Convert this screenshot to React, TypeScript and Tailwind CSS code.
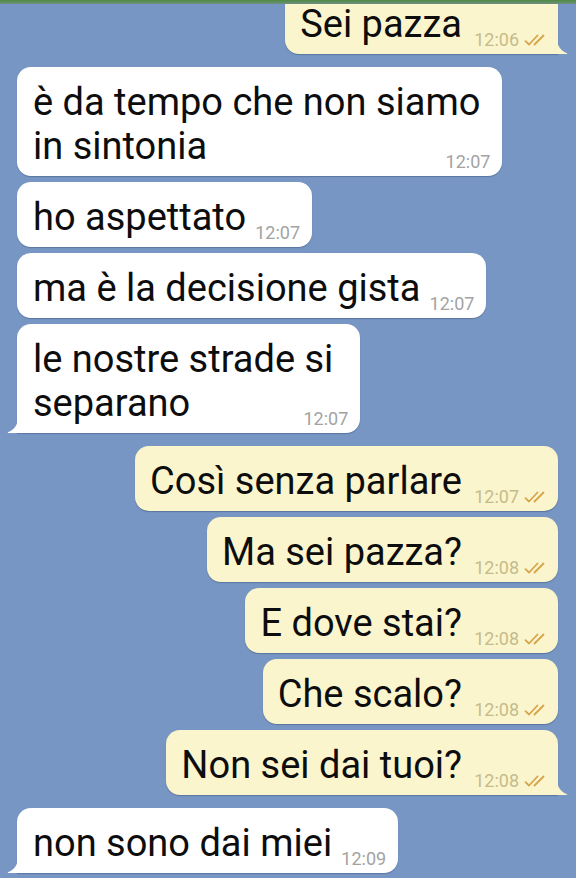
import React from "react";

type Msg = {
  out: boolean;
  lines: string[];
  time: string;
  tail?: boolean;
  gap?: "group" | "near" | "first";
  wide?: string;
};

const MESSAGES: Msg[] = [
  { out: true, lines: ["Sei pazza"], time: "12:06", tail: true, gap: "first" },
  { out: false, lines: ["è da tempo che non siamo", "in sintonia"], time: "12:07", gap: "group", wide: "pr-[22px]" },
  { out: false, lines: ["ho aspettato"], time: "12:07", gap: "near" },
  { out: false, lines: ["ma è la decisione gista"], time: "12:07", gap: "near" },
  { out: false, lines: ["le nostre strade si", "separano"], time: "12:07", tail: true, gap: "near", wide: "pr-[27px]" },
  { out: true, lines: ["Così senza parlare"], time: "12:07", gap: "group" },
  { out: true, lines: ["Ma sei pazza?"], time: "12:08", gap: "near" },
  { out: true, lines: ["E dove stai?"], time: "12:08", gap: "near" },
  { out: true, lines: ["Che scalo?"], time: "12:08", gap: "near" },
  { out: true, lines: ["Non sei dai tuoi?"], time: "12:08", tail: true, gap: "near" },
  { out: false, lines: ["non sono dai miei"], time: "12:09", tail: true, gap: "group" },
];

function DoubleCheck() {
  return (
    <svg width="24" height="12" viewBox="0 0 24 12" fill="none" className="inline-block">
      <path d="M1.5 7.2 L5 10.5 L13.5 1.5" stroke="#d6a54a" strokeWidth="1.8" strokeLinecap="round" strokeLinejoin="round" />
      <path d="M10.5 10.5 L19.5 1.5" stroke="#d6a54a" strokeWidth="1.8" strokeLinecap="round" />
    </svg>
  );
}

function Tail({ out }: { out: boolean }) {
  if (out) {
    return (
      <svg width="11" height="16" viewBox="0 0 11 16" className="absolute -right-[10px] bottom-0">
        <path d="M0 0 C0 8 4 13 10 15.2 Q11 16 9.5 16 L0 16 Z" fill="#fbf5cd" />
      </svg>
    );
  }
  return (
    <svg width="11" height="16" viewBox="0 0 11 16" className="absolute -left-[10px] bottom-0">
      <path d="M11 0 C11 8 7 13 1 15.2 Q0 16 1.5 16 L11 16 Z" fill="#ffffff" />
    </svg>
  );
}

function Bubble({ m }: { m: Msg }) {
  const gapClass =
    m.gap === "first" ? "-mt-[11px]" : m.gap === "group" ? "mt-[13px]" : "mt-[6px]";
  const side = m.out ? "self-end mr-[18px] bg-[#fbf5cd]" : "self-start ml-[17px] bg-white";
  const corner = m.tail ? (m.out ? "rounded-[14px] rounded-br-none" : "rounded-[14px] rounded-bl-none") : "rounded-[14px]";
  const pad = m.out ? "pl-[15px] pr-[10px]" : `pl-[16px] ${m.wide ?? "pr-[12px]"}`;

  return (
    <div className={`relative ${gapClass} ${side} ${corner} ${pad} pt-[13px] pb-[8px] shadow-[0_1px_1px_rgba(40,60,90,0.35)]`}>
      <div className="text-[38px] leading-[44px] text-[#0d0d0d] whitespace-nowrap">
        {m.lines.map((l, i) => (
          <React.Fragment key={i}>
            {i > 0 && <br />}
            {l}
          </React.Fragment>
        ))}
        <span className={`inline-block ${m.out ? "w-[86px]" : "w-[54px]"}`} />
      </div>
      <div
        className={`absolute bottom-[4px] flex items-center gap-[5px] text-[18px] leading-[20px] ${
          m.out ? "right-[10px] text-[#c4bc8c]" : "right-[12px] text-[#a3a3a3]"
        }`}
      >
        <span>{m.time}</span>
        {m.out && <DoubleCheck />}
      </div>
      {m.tail && <Tail out={m.out} />}
    </div>
  );
}

export default function App() {
  return (
    <div
      className="relative w-[576px] h-[878px] overflow-hidden bg-[#7796c3]"
      style={{ fontFamily: "Roboto, 'Noto Sans', sans-serif" }}
    >
      <div className="flex flex-col">
        {MESSAGES.map((m, i) => (
          <Bubble key={i} m={m} />
        ))}
      </div>
      <div className="absolute top-0 left-0 right-0 h-[4px] bg-gradient-to-b from-[#4f8a3f] to-[#6c9180]" />
    </div>
  );
}
